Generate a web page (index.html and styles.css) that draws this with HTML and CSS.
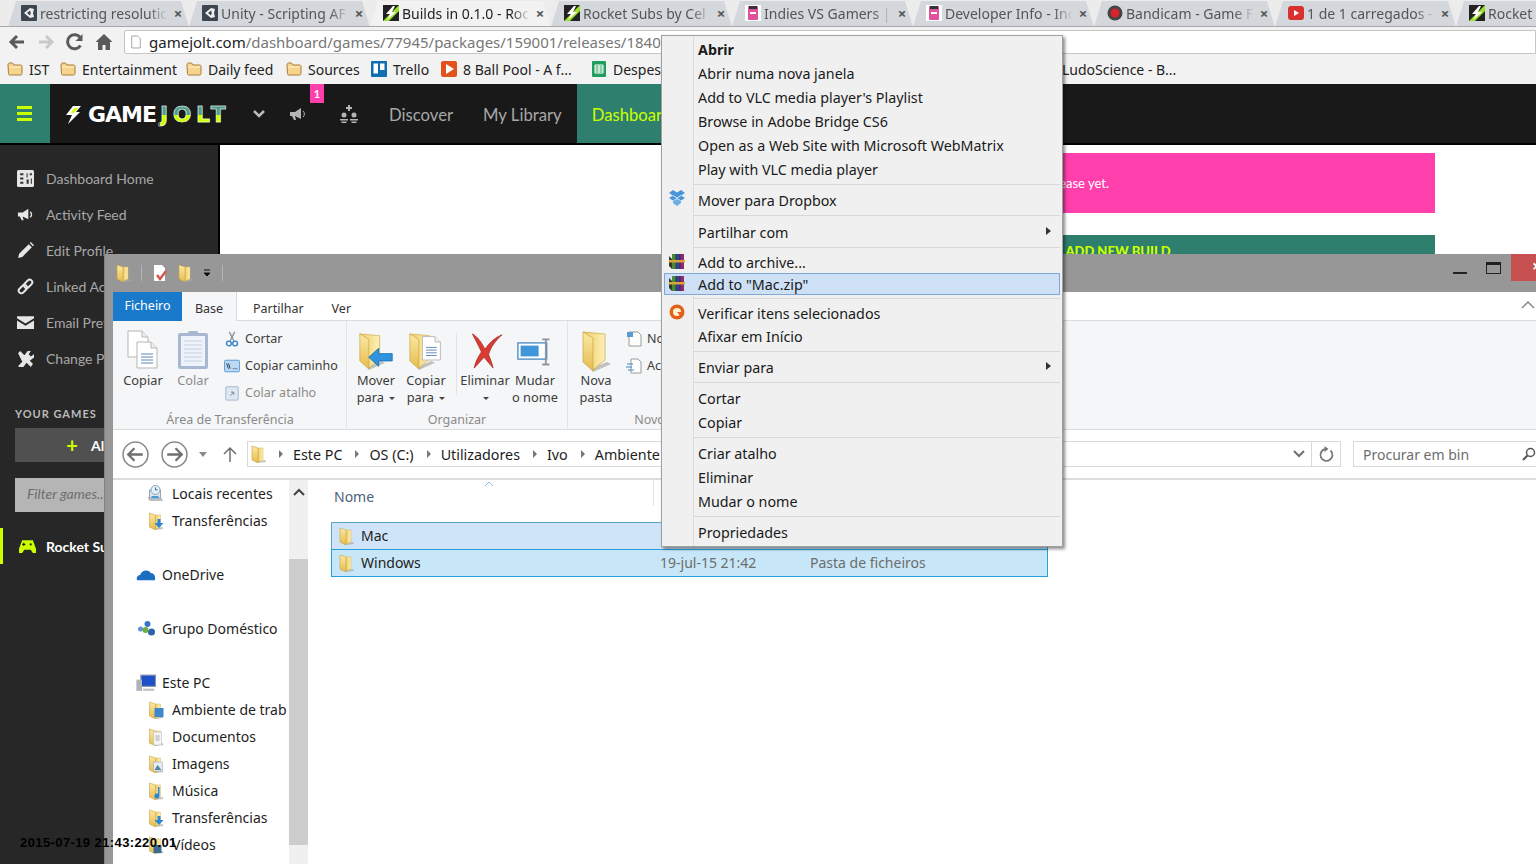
FILE: index.html
```html
<!DOCTYPE html>
<html>
<head>
    <title>Builds in 0.1.0 - Rocket Subs</title>
    <link rel="stylesheet" href="styles.css">
</head>
<body>
    <!-- shared icons -->
    <svg class="defs" width="0" height="0">
        <defs>
            <linearGradient id="fldA" x1="0" y1="0" x2="0" y2="1"><stop offset="0" stop-color="#fbe9a4"/><stop offset="1" stop-color="#e6bb4e"/></linearGradient>
            <linearGradient id="fldB" x1="0" y1="0" x2="1" y2="0"><stop offset="0" stop-color="#f0cb62"/><stop offset="1" stop-color="#fdf0b8"/></linearGradient>
        </defs>
        <symbol id="fld" viewBox="0 0 16 18">
            <path d="M8 16l7-1 1 2-8 1z" fill="#a9a9a4" opacity=".7"/>
            <path d="M8 3h5v12l-5 2z" fill="url(#fldB)" stroke="#d9b658" stroke-width=".5"/>
            <path d="M2 1l6 2v15l-6-3z" fill="url(#fldA)" stroke="#c9a23e" stroke-width=".6"/>
        </symbol>
        <symbol id="fldbig" viewBox="0 0 30 42">
            <path d="M10 39l16-7 4 2-18 8z" fill="#a9a9a4" opacity=".7"/>
            <path d="M2 2l22 2v26l-12 10z" fill="url(#fldB)" stroke="#c9a440" stroke-width=".7"/>
            <path d="M2 2l10 6v33L2 32z" fill="url(#fldA)" stroke="#c9a440" stroke-width=".7"/>
        </symbol>
        <symbol id="page" viewBox="0 0 22 28">
            <path d="M1 1h14l6 6v20H1z" fill="#fff" stroke="#b5b5b5"/>
            <path d="M15 1v6h6" fill="#eee" stroke="#b5b5b5"/>
        </symbol>
        <symbol id="rar" viewBox="0 0 16 16">
            <path d="M0 3l3 3v10l-3-3z" fill="#2e3a24"/>
            <path d="M3 1h4v15H3z" fill="#4a8a3a"/>
            <path d="M7 1h4v15H7z" fill="#3b3f9e"/>
            <path d="M11 1h4v15h-4z" fill="#8c2a74"/>
            <path d="M7 1v15M11 1v15" stroke="#222" stroke-width=".7"/>
            <path d="M0 7h16v2.500H0z" fill="#d9a23a"/>
        </symbol>
        <symbol id="bmfolder" viewBox="0 0 16 14">
            <path d="M1 3c0-1 .5-2 1.500-2h3l1.500 2h6.500c1 0 1.500.5 1.500 1.500v7c0 1-.5 1.500-1.500 1.500h-10.500c-1 0-1.500-.5-1.500-1.500z" fill="#f6d48c" stroke="#a97c3a"/>
            <path d="M2 5h12" stroke="#fff3d0"/>
        </symbol>
        <symbol id="unity" viewBox="0 0 16 16">
            <rect width="16" height="16" rx="1" fill="#3d4650"/>
            <path d="M3 8l6-5 4 1-1 4 1 4-4 1zM6 8l3 2.500.800-2.500-.800-2.500z" fill="#eee"/>
        </symbol>
        <symbol id="gj" viewBox="0 0 16 16">
            <rect width="16" height="16" fill="#222"/>
            <path d="M0 16L16 0v6L6 16z" fill="#9adf2a"/>
            <path d="M10 1L3 9h4l-3 6 9-8H9l3-6z" fill="#fff"/>
        </symbol>
        <symbol id="ivg" viewBox="0 0 16 16">
            <rect width="16" height="16" fill="#fff"/>
            <rect x="3" y="1" width="10" height="14" rx="1" fill="#e0529c"/>
            <rect x="4" y="1" width="8" height="3" fill="#333"/>
            <rect x="5" y="7" width="6" height="2" fill="#fff"/>
        </symbol>
        <symbol id="bandi" viewBox="0 0 16 16">
            <circle cx="8" cy="8" r="7.500" fill="#444"/>
            <circle cx="8" cy="8" r="4.500" fill="#d8232a"/>
        </symbol>
        <symbol id="yt" viewBox="0 0 16 16">
            <rect y="1" width="16" height="14" rx="3" fill="#d9322e"/>
            <path d="M6 5l5 3-5 3z" fill="#fff"/>
        </symbol>
        <symbol id="arrowtri" viewBox="0 0 6 8">
            <path d="M1 0l4 4-4 4z" fill="#777"/>
        </symbol>
    </svg>

    <div class="browser">
        <div class="tabstrip">
            <div class="tab"><svg class="fav"><use href="#unity"/></svg><span class="tab-title">restricting resolutic</span><span class="tab-x">×</span></div>
            <div class="tab"><svg class="fav"><use href="#unity"/></svg><span class="tab-title">Unity - Scripting AF</span><span class="tab-x">×</span></div>
            <div class="tab active"><svg class="fav"><use href="#gj"/></svg><span class="tab-title">Builds in 0.1.0 - Roc</span><span class="tab-x">×</span></div>
            <div class="tab"><svg class="fav"><use href="#gj"/></svg><span class="tab-title">Rocket Subs by Cel</span><span class="tab-x">×</span></div>
            <div class="tab"><svg class="fav"><use href="#ivg"/></svg><span class="tab-title">Indies VS Gamers |</span><span class="tab-x">×</span></div>
            <div class="tab"><svg class="fav"><use href="#ivg"/></svg><span class="tab-title">Developer Info - Inc</span><span class="tab-x">×</span></div>
            <div class="tab"><svg class="fav"><use href="#bandi"/></svg><span class="tab-title">Bandicam - Game F</span><span class="tab-x">×</span></div>
            <div class="tab"><svg class="fav"><use href="#yt"/></svg><span class="tab-title">1 de 1 carregados -</span><span class="tab-x">×</span></div>
            <div class="tab"><svg class="fav"><use href="#gj"/></svg><span class="tab-title">Rocket</span></div>
        </div>

        <div class="toolbar">
            <svg class="tb-icon" viewBox="0 0 20 20"><path d="M17 10H5M10 4l-6 6 6 6" fill="none" stroke="#5a5a5a" stroke-width="3"/></svg>
            <svg class="tb-icon" viewBox="0 0 20 20"><path d="M3 10h12M10 4l6 6-6 6" fill="none" stroke="#c9c9c9" stroke-width="3"/></svg>
            <svg class="tb-icon" viewBox="0 0 20 20"><path d="M15.500 13.500A7 7 0 1 1 15.500 6" fill="none" stroke="#5a5a5a" stroke-width="3"/><path d="M17.500 2v7h-7z" fill="#5a5a5a"/></svg>
            <svg class="tb-icon" viewBox="0 0 20 20"><path d="M10 2L1.500 10H4v8h4.500v-5h3v5H16v-8h2.500z" fill="#5a5a5a"/></svg>
            <div class="urlbar">
                <svg class="url-page" viewBox="0 0 14 16"><path d="M2 1h7l3 3v11H2z" fill="#fff" stroke="#999"/></svg>
                <span class="url-host">gamejolt.com</span><span class="url-path">/dashboard/games/77945/packages/159001/releases/184012/edit</span>
            </div>
        </div>

        <div class="bookmarks">
            <div class="bm bm-ist"><svg class="bm-icon"><use href="#bmfolder"/></svg>IST</div>
            <div class="bm bm-ent"><svg class="bm-icon"><use href="#bmfolder"/></svg>Entertainment</div>
            <div class="bm bm-daily"><svg class="bm-icon"><use href="#bmfolder"/></svg>Daily feed</div>
            <div class="bm bm-src"><svg class="bm-icon"><use href="#bmfolder"/></svg>Sources</div>
            <div class="bm bm-trello"><svg class="bm-icon" viewBox="0 0 16 16"><rect width="16" height="16" rx="1" fill="#0f6fb0"/><rect x="2.500" y="2.500" width="4.500" height="10" fill="#fff"/><rect x="9" y="2.500" width="4.500" height="6.500" fill="#fff"/></svg>Trello</div>
            <div class="bm bm-pool"><svg class="bm-icon" viewBox="0 0 16 16"><rect width="16" height="16" rx="2" fill="#e2521d"/><path d="M5 3l8 5-8 5z" fill="#fff"/></svg>8 Ball Pool - A f...</div>
            <div class="bm bm-sheet"><svg class="bm-icon" viewBox="0 0 16 16"><rect x="1" width="14" height="16" rx="1" fill="#1f9e5e"/><path d="M4 4h8v8H4zM4 8h8M4 6h8M4 10h8M8 4v8" fill="none" stroke="#fff"/></svg>Despesas</div>
            <div class="bm bm-ludo">LudoScience - B...</div>
        </div>

        <nav class="site-nav">
            <div class="burger"><span></span><span></span><span></span></div>
            <div class="gj-logo">
                <svg class="gj-bolt" viewBox="0 0 16 18"><path d="M8 0h8L11 6h4L3 18l4-9H1z" fill="#fff"/><path d="M9 2h4L9 7H6z" fill="#ccff00"/></svg>
                <span class="gj-game">GAME</span><span class="gj-jolt">JOLT</span>
            </div>
            <svg class="nav-chev" viewBox="0 0 14 10"><path d="M2 2l5 5 5-5" fill="none" stroke="#bbb" stroke-width="2.500"/></svg>
            <svg class="nav-mega" viewBox="0 0 18 14"><path d="M1 5h5l6-4v11L6 9 7 13H5L3 9H1z" fill="#b5b5b5"/><path d="M14 4a4 4 0 0 1 0 6" fill="none" stroke="#b5b5b5"/></svg>
            <span class="nav-badge">1</span>
            <svg class="nav-people" viewBox="0 0 20 20"><path d="M9 1h2v2h2v2h-2v2H9V5H7V3h2z" fill="#b5b5b5"/><circle cx="5" cy="11" r="2.500" fill="#b5b5b5"/><circle cx="15" cy="11" r="2.500" fill="#b5b5b5"/><path d="M1 15h8v1.500H1zM11 15h8v1.500h-8zM2.500 17.500h5V19h-5zM12.500 17.500h5V19h-5z" fill="#b5b5b5"/></svg>
            <a class="nav-link nav-discover">Discover</a>
            <a class="nav-link">My Library</a>
            <a class="nav-link nav-active">Dashboard</a>
        </nav>

        <div class="page">
            <aside class="sidebar">
                <div class="side-item">
                    <svg class="side-icon" viewBox="0 0 16 16"><rect width="16" height="16" rx="1.500" fill="#e6e6e6"/><path d="M3 3h3v2H3zM3 7h3v2H3zM3 11h3v2H3zM9 3h1v4H9zM12 3h2v2h-2zM9 9h2v4H9zM13 8h1v5h-1z" fill="#333"/></svg>
                    Dashboard Home
                </div>
                <div class="side-item">
                    <svg class="side-icon" viewBox="0 0 18 14"><path d="M1 5h5l6-4v11L6 9 7 13H5L3 9H1z" fill="#e6e6e6"/><path d="M14 4a4 4 0 0 1 0 6" fill="none" stroke="#e6e6e6" stroke-width="1.500"/></svg>
                    Activity Feed
                </div>
                <div class="side-item">
                    <svg class="side-icon" viewBox="0 0 16 16"><path d="M1 15l1-4L11 2l3 3-9 9zM12 1l1-1 3 3-1 1z" fill="#e6e6e6"/></svg>
                    Edit Profile
                </div>
                <div class="side-item">
                    <svg class="side-icon" viewBox="0 0 16 16"><g transform="rotate(-45 8 8)" fill="none" stroke="#e6e6e6" stroke-width="1.800"><rect x="0" y="5.500" width="9" height="5" rx="2.500"/><rect x="7" y="5.500" width="9" height="5" rx="2.500"/></g></svg>
                    Linked Accounts
                </div>
                <div class="side-item">
                    <svg class="side-icon" viewBox="0 0 16 12"><path d="M0 0h16v2L8 7 0 2z" fill="#e6e6e6"/><path d="M0 4l8 5 8-5v8H0z" fill="#e6e6e6"/></svg>
                    Email Preferences
                </div>
                <div class="side-item">
                    <svg class="side-icon" viewBox="0 0 16 16"><path d="M1 3l2-2 4 4 3-4h3l-2 3 2 2 3-2v3l-4 3 3 3-2 3-4-4-3 4H2l-1-1 4-4z" fill="#e6e6e6"/></svg>
                    Change Password
                </div>
                <div class="side-title">YOUR GAMES</div>
                <div class="side-add"><span class="side-plus">+</span>All Games</div>
                <div class="side-filter">Filter games...</div>
                <div class="side-game">
                    <svg class="side-icon" viewBox="0 0 16 12"><path d="M3 0h10l3 8v4h-3l-2-3H5l-2 3H0V8z" fill="#ccff00"/><path d="M3 4h3M4.500 2.500v3" stroke="#222"/><circle cx="11" cy="4" r="1" fill="#222"/></svg>
                    Rocket Subs
                </div>
            </aside>
            <main class="content">
                <div class="notice">This package doesn't have a release yet.</div>
                <div class="add-build">ADD NEW BUILD</div>
            </main>
        </div>
    </div>

    <!-- explorer window -->
    <section class="explorer">
        <header class="ex-title">
            <svg class="qat-icon qat-first"><use href="#fld"/></svg>
            <span class="qat-sep"></span>
            <svg class="qat-icon" viewBox="0 0 16 18"><path d="M2 1h8l3 3v13H2z" fill="#fff"/><path d="M5 11l3 4 6-8" fill="none" stroke="#d9534f" stroke-width="2.400"/></svg>
            <svg class="qat-icon"><use href="#fld"/></svg>
            <svg class="qat-drop" viewBox="0 0 10 10"><path d="M2 2h6M2 5h6l-3 3z" stroke="#111" fill="#111"/></svg>
            <span class="qat-sep"></span>
            <div class="win-btns">
                <span class="win-min"></span>
                <span class="win-max"></span>
                <span class="win-close">×</span>
            </div>
        </header>
        <div class="ex-body">
            <div class="rb-tabs">
                <span class="rb-file">Ficheiro</span>
                <span class="rb-tab rb-base">Base</span>
                <span class="rb-tab rb-share">Partilhar</span>
                <span class="rb-tab">Ver</span>
                <svg class="rb-collapse" viewBox="0 0 14 8"><path d="M1 7l6-6 6 6" fill="none" stroke="#888" stroke-width="1.500"/></svg>
            </div>

            <div class="ribbon">
                <div class="rb-group rb-g1">
                    <div class="rb-tools">
                        <div class="rb-big">
                            <svg class="rb-ico" viewBox="0 0 36 42"><use href="#page" x="2" y="0" width="22" height="28"/><use href="#page" x="11" y="11" width="22" height="28"/><path d="M16 24h12M16 27h12M16 30h12M16 33h12" stroke="#5a84b8"/></svg>
                            <span>Copiar</span>
                        </div>
                        <div class="rb-big rb-off">
                            <svg class="rb-ico" viewBox="0 0 36 42"><rect x="3" y="3" width="30" height="36" rx="2" fill="#a8b8d2"/><rect x="6" y="6" width="24" height="30" fill="#eef3fa"/><path d="M9 11h18M9 15h18M9 19h18M9 23h18M9 27h18M9 31h18" stroke="#c3d0e4"/><path d="M12 4h12l-2-3h-8z" fill="#a8b8d2"/></svg>
                            <span>Colar</span>
                        </div>
                        <div class="rb-small">
                            <div class="rb-row"><svg class="rb-sm" viewBox="0 0 16 18"><path d="M5 1l5 10M11 1L6 11" stroke="#8a9098" stroke-width="1.500"/><circle cx="4.500" cy="14" r="2.700" fill="none" stroke="#2f7fc8" stroke-width="1.500"/><circle cx="11.500" cy="14" r="2.700" fill="none" stroke="#2f7fc8" stroke-width="1.500"/></svg>Cortar</div>
                            <div class="rb-row"><svg class="rb-sm" viewBox="0 0 18 14"><rect x=".5" y=".5" width="17" height="13" rx="1.500" fill="#bcd9f3" stroke="#4c94d4"/><path d="M3 4l2 6M5 4l2 6M10 10h1M12 10h1M14 10h1" stroke="#234"/></svg>Copiar caminho</div>
                            <div class="rb-row rb-off"><svg class="rb-sm" viewBox="0 0 16 18"><rect x="1" y="2" width="14" height="15" rx="1" fill="#dfe7f2" stroke="#9db0cb"/><path d="M6 12l4-4M7 8h3v3" stroke="#6b7e98" fill="none"/></svg>Colar atalho</div>
                        </div>
                    </div>
                    <div class="rb-label">Área de Transferência</div>
                </div>

                <div class="rb-group rb-g2">
                    <div class="rb-tools">
                        <div class="rb-big">
                            <svg class="rb-ico" viewBox="0 0 40 42"><use href="#fldbig" x="0" y="0" width="30" height="42"/><path d="M12 28l11-10v6h15v8H23v6z" fill="#2f93dd" stroke="#1a6fb5"/></svg>
                            <span>Mover</span>
                            <span>para <i class="caret"></i></span>
                        </div>
                        <div class="rb-big">
                            <svg class="rb-ico" viewBox="0 0 40 42"><use href="#fldbig" x="0" y="0" width="30" height="42"/><use href="#page" x="15" y="4" width="22" height="28"/><path d="M20 17h12M20 20h12M20 23h12M20 26h12" stroke="#5a84b8"/></svg>
                            <span>Copiar</span>
                            <span>para <i class="caret"></i></span>
                        </div>
                        <span class="rb-vsep"></span>
                        <div class="rb-big">
                            <svg class="rb-ico" viewBox="0 0 40 42"><path d="M6 2c6 3 11 11 14 17C25 12 31 6 39 3c-7 6-13 14-15 22 2 5 4 10 5 15-3-4-7-8-10-12-4 4-8 9-11 12 1-6 4-12 8-18C13 15 9 8 6 2z" fill="#d93a32" stroke="#a82420" stroke-width=".8"/></svg>
                            <span>Eliminar</span>
                            <span><i class="caret"></i></span>
                        </div>
                        <div class="rb-big">
                            <svg class="rb-ico" viewBox="0 0 40 42"><rect x="1" y="12" width="32" height="18" fill="#fff" stroke="#4c8cc0" stroke-width="1.500"/><rect x="4" y="15" width="20" height="12" fill="#3f96d9"/><path d="M28 8h8M28 36h8M32 8v28" stroke="#8d959e" stroke-width="2"/></svg>
                            <span>Mudar</span>
                            <span>o nome</span>
                        </div>
                    </div>
                    <div class="rb-label">Organizar</div>
                </div>

                <div class="rb-group rb-g3">
                    <div class="rb-tools">
                        <div class="rb-big">
                            <svg class="rb-ico" viewBox="0 0 36 42"><use href="#fldbig" x="3" y="0" width="30" height="42"/></svg>
                            <span>Nova</span>
                            <span>pasta</span>
                        </div>
                        <div class="rb-small rb-small-new">
                            <div class="rb-row"><svg class="rb-sm" viewBox="0 0 16 16"><path d="M3 1h9l3 3v11H3z" fill="#fff" stroke="#9a9a9a"/><rect x="1" y="1" width="6" height="5" fill="#5b9bd5"/></svg>Novo item</div>
                            <div class="rb-row"><svg class="rb-sm" viewBox="0 0 16 16"><path d="M5 1h7l3 3v11H5z" fill="#fff" stroke="#9a9a9a"/><path d="M1 6h6M0 9h6M2 12h6" stroke="#3c86c8"/></svg>Acesso fácil</div>
                        </div>
                    </div>
                    <div class="rb-label">Novo</div>
                </div>
            </div>

            <div class="addr-row">
                <svg class="addr-circle" viewBox="0 0 26 26"><circle cx="13" cy="13" r="12" fill="none" stroke="#8a8a8a" stroke-width="1.500"/><path d="M20 13H7M12 7l-6 6 6 6" fill="none" stroke="#6f6f6f" stroke-width="2.200"/></svg>
                <svg class="addr-circle" viewBox="0 0 26 26"><circle cx="13" cy="13" r="12" fill="none" stroke="#8a8a8a" stroke-width="1.500"/><path d="M6 13h13M14 7l6 6-6 6" fill="none" stroke="#6f6f6f" stroke-width="2.200"/></svg>
                <svg class="addr-drop" viewBox="0 0 8 5"><path d="M0 0h8L4 5z" fill="#8a8a8a"/></svg>
                <svg class="addr-up" viewBox="0 0 14 16"><path d="M7 16V2M1 8l6-6 6 6" fill="none" stroke="#6f6f6f" stroke-width="1.500"/></svg>
                <div class="addr-box">
                    <svg class="addr-fld"><use href="#fld"/></svg>
                    <svg class="crumb-tri"><use href="#arrowtri"/></svg><span class="crumb">Este PC</span>
                    <svg class="crumb-tri"><use href="#arrowtri"/></svg><span class="crumb">OS (C:)</span>
                    <svg class="crumb-tri"><use href="#arrowtri"/></svg><span class="crumb">Utilizadores</span>
                    <svg class="crumb-tri"><use href="#arrowtri"/></svg><span class="crumb">Ivo</span>
                    <svg class="crumb-tri"><use href="#arrowtri"/></svg><span class="crumb">Ambiente de trabalho</span>
                    <svg class="addr-chev" viewBox="0 0 12 8"><path d="M1 1l5 5 5-5" fill="none" stroke="#6f6f6f" stroke-width="2"/></svg>
                    <svg class="addr-refresh" viewBox="0 0 16 16"><path d="M12.500 4.500a6 6 0 1 1-5-1.500" fill="none" stroke="#777" stroke-width="1.800"/><path d="M6.500 0v6l4-3z" fill="#777"/></svg>
                </div>
                <div class="search-box">
                    <span>Procurar em bin</span>
                    <svg class="search-ico" viewBox="0 0 14 14"><circle cx="8.500" cy="5.500" r="4" fill="none" stroke="#555" stroke-width="1.500"/><path d="M5.500 8.500L1 13" stroke="#555" stroke-width="2"/></svg>
                </div>
            </div>

            <div class="ex-main">
                <div class="navpane">
                    <div class="nv nv-1"><svg class="nv-icon" viewBox="0 0 18 18"><path d="M1 12h13l3 4H3z" fill="#b9c0c8"/><rect x="3" y="5" width="11" height="8" fill="#dfe5ea" stroke="#98a4ae"/><circle cx="9" cy="5" r="4.500" fill="#e6f0f7" stroke="#7fa6c4"/><path d="M9 2.500V5h2" stroke="#3a6f98" fill="none"/><path d="M5 11h7v2H5z" fill="#4e9ad4"/></svg>Locais recentes</div>
                    <div class="nv nv-1"><svg class="nv-icon" viewBox="0 0 16 18"><use href="#fld" width="16" height="18"/><path d="M10 7h3v4h3l-4.500 5L7 11h3z" fill="#2c86d6"/></svg>Transferências</div>
                    <div class="nv nv-0 nv-gap"><svg class="nv-icon" viewBox="0 0 20 14"><path d="M1 12c-1-3 1-5 3-5 1-4 7-6 10-2 3 0 5 3 4 7z" fill="#1b6ec2"/></svg>OneDrive</div>
                    <div class="nv nv-0 nv-gap"><svg class="nv-icon" viewBox="0 0 18 18"><circle cx="10" cy="4" r="3" fill="#3a74c4"/><circle cx="3" cy="9" r="2.500" fill="#5b92d8"/><circle cx="14" cy="12" r="3.500" fill="#2c62ae"/><circle cx="8" cy="10" r="3" fill="#6cae3f"/></svg>Grupo Doméstico</div>
                    <div class="nv nv-0 nv-gap"><svg class="nv-icon" viewBox="0 0 18 16"><rect x="4" y="1" width="13" height="10" fill="#1e50c8" stroke="#8a97a8"/><path d="M0 5h5v10H0z" fill="#aeb4bc"/><path d="M6 13h10v2H6z" fill="#c0c4ca"/></svg>Este PC</div>
                    <div class="nv nv-1"><svg class="nv-icon" viewBox="0 0 16 18"><use href="#fld" width="16" height="18"/><rect x="7" y="7" width="9" height="9" fill="#3f86cc"/></svg>Ambiente de trab</div>
                    <div class="nv nv-1"><svg class="nv-icon" viewBox="0 0 16 18"><use href="#fld" width="16" height="18"/><rect x="6" y="4" width="8" height="13" fill="#f4f4f4" stroke="#bbb" stroke-width=".6"/><path d="M8 8h4M8 10h4M8 12h4" stroke="#aaa"/></svg>Documentos</div>
                    <div class="nv nv-1"><svg class="nv-icon" viewBox="0 0 16 18"><use href="#fld" width="16" height="18"/><rect x="6" y="7" width="9" height="9" fill="#e4edf4" stroke="#aaa" stroke-width=".6"/><path d="M7 15l3-5 4 5z" fill="#4f86a8"/></svg>Imagens</div>
                    <div class="nv nv-1"><svg class="nv-icon" viewBox="0 0 16 18"><use href="#fld" width="16" height="18"/><path d="M12 5v9a2.500 2.500 0 1 1-1.500-2.300V5z" fill="#2c86d6"/></svg>Música</div>
                    <div class="nv nv-1"><svg class="nv-icon" viewBox="0 0 16 18"><use href="#fld" width="16" height="18"/><path d="M10 7h3v4h3l-4.500 5L7 11h3z" fill="#2c86d6"/></svg>Transferências</div>
                    <div class="nv nv-1"><svg class="nv-icon" viewBox="0 0 16 18"><use href="#fld" width="16" height="18"/><rect x="6" y="9" width="8" height="8" fill="#3c6c94"/></svg>Vídeos</div>
                </div>
                <div class="nav-scroll">
                    <svg class="nav-scroll-up" viewBox="0 0 12 8"><path d="M1 7l5-5 5 5" fill="none" stroke="#444" stroke-width="2"/></svg>
                    <div class="nav-scroll-thumb"></div>
                </div>
                <div class="files">
                    <div class="files-head">
                        <span class="col-name">Nome</span>
                        <svg class="sort-tri" viewBox="0 0 10 5"><path d="M1 5l4-4 4 4" fill="none" stroke="#8fb4d6"/></svg>
                        <span class="col-sep"></span>
                    </div>
                    <div class="file-row file-mac">
                        <svg class="file-ico"><use href="#fld"/></svg>
                        <span class="file-name">Mac</span>
                        <span class="file-date">19-jul-15 21:42</span>
                        <span class="file-type">Pasta de ficheiros</span>
                    </div>
                    <div class="file-row file-win">
                        <svg class="file-ico"><use href="#fld"/></svg>
                        <span class="file-name">Windows</span>
                        <span class="file-date">19-jul-15 21:42</span>
                        <span class="file-type">Pasta de ficheiros</span>
                    </div>
                </div>
            </div>
        </div>
    </section>

    <!-- right click menu -->
    <div class="menu">
        <div class="mi mi-bold">Abrir</div>
        <div class="mi">Abrir numa nova janela</div>
        <div class="mi">Add to VLC media player's Playlist</div>
        <div class="mi">Browse in Adobe Bridge CS6</div>
        <div class="mi">Open as a Web Site with Microsoft WebMatrix</div>
        <div class="mi">Play with VLC media player</div>
        <div class="ms"></div>
        <div class="mi"><svg class="mi-ico" viewBox="0 0 16 16"><path d="M4 0l4 2.500L12 0l4 3-4 2.500L16 8l-4 2.500-4-2.500-4 2.500L0 8l4-2.500L0 3z" fill="#4a94d8"/><path d="M4 11l4-2 4 2v2l-4 3-4-3z" fill="#6aaee6"/><path d="M4 5.500l4 2.500 4-2.500" fill="none" stroke="#d6e8f7"/></svg>Mover para Dropbox</div>
        <div class="ms ms-8"></div>
        <div class="mi mi-sub">Partilhar com</div>
        <div class="ms"></div>
        <div class="mi mi-22"><svg class="mi-ico"><use href="#rar"/></svg>Add to archive...</div>
        <div class="mi mi-22 mi-hover"><svg class="mi-ico"><use href="#rar"/></svg>Add to "Mac.zip"</div>
        <div class="ms"></div>
        <div class="mi mi-22"><svg class="mi-ico" viewBox="0 0 16 16"><circle cx="8" cy="8" r="7.500" fill="#e2611a"/><circle cx="8" cy="8" r="4" fill="#fff0d0"/><path d="M8 8h6l-2 5z" fill="#e2611a"/></svg>Verificar itens selecionados</div>
        <div class="mi">Afixar em Início</div>
        <div class="ms"></div>
        <div class="mi mi-sub">Enviar para</div>
        <div class="ms"></div>
        <div class="mi">Cortar</div>
        <div class="mi">Copiar</div>
        <div class="ms"></div>
        <div class="mi">Criar atalho</div>
        <div class="mi">Eliminar</div>
        <div class="mi">Mudar o nome</div>
        <div class="ms"></div>
        <div class="mi">Propriedades</div>
    </div>

    <div class="stamp">2015-07-19 21:43:220.01</div>
</body>
</html>
```

FILE: styles.css
```css
html, body {
    margin: 0;
    padding: 0;
    height: 100%;
    overflow: hidden;
}

body {
    font-family: "Noto Sans", sans-serif;
    background-color: #fff;
    color: #222;
}

.defs {
    position: absolute;
}

.browser {
    display: flex;
    flex-direction: column;
    height: 864px;
}

/* tabs */
.tabstrip {
    display: flex;
    flex: none;
    height: 27px;
    padding-left: 8px;
    background-color: #ececec;
    border-bottom: 1px solid #a8a8a8;
    box-sizing: border-box;
    overflow: hidden;
}

.tab {
    display: flex;
    flex: none;
    align-items: center;
    width: 181px;
    min-width: 0;
    height: 26px;
    margin-top: 1px;
    padding: 0 4px 2px 13px;
    box-sizing: border-box;
    background-color: #d4d7dc;
    color: #555;
    font-size: 14px;
    clip-path: polygon(8px 0, calc(100% - 8px) 0, 100% 100%, 0 100%);
}

.tab.active {
    background-color: #f2f2f2;
    color: #222;
}

.fav {
    flex: none;
    width: 16px;
    height: 16px;
    margin-right: 3px;
}

.tab-title {
    flex: 1;
    min-width: 0;
    white-space: nowrap;
    overflow: hidden;
    -webkit-mask-image: linear-gradient(to right, #000 85%, transparent);
    mask-image: linear-gradient(to right, #000 85%, transparent);
}

.tab-x {
    flex: none;
    width: 14px;
    margin-left: 3px;
    font-size: 15px;
    font-weight: bold;
    color: #555;
    text-align: center;
}

/* chrome toolbar */
.toolbar {
    display: flex;
    align-items: center;
    flex: none;
    height: 29px;
    padding-left: 7px;
    background-color: #f2f2f2;
}

.tb-icon {
    flex: none;
    width: 20px;
    height: 20px;
    margin-right: 9px;
}

.urlbar {
    display: flex;
    align-items: center;
    flex: 1;
    height: 24px;
    min-width: 0;
    margin-left: 1px;
    padding-left: 5px;
    padding-top: 1px;
    box-sizing: border-box;
    background-color: #fff;
    border: 1px solid #c6c6c6;
    border-radius: 2px 0 0 2px;
    font-size: 15px;
    white-space: nowrap;
    overflow: hidden;
}

.url-page {
    flex: none;
    width: 12px;
    height: 16px;
    margin-right: 7px;
}

.url-path {
    color: #777;
}

/* bookmarks */
.bookmarks {
    display: flex;
    align-items: center;
    flex: none;
    height: 28px;
    padding-left: 7px;
    padding-bottom: 2px;
    box-sizing: border-box;
    background-color: #f2f2f2;
    font-size: 14px;
    white-space: nowrap;
}

.bm {
    display: flex;
    align-items: center;
    flex: none;
    box-sizing: border-box;
}

.bm-icon {
    flex: none;
    width: 16px;
    height: 16px;
    margin-right: 6px;
}

.bm-ist { width: 53px; }
.bm-ent { width: 126px; }
.bm-daily { width: 100px; }
.bm-src { width: 85px; }
.bm-trello { width: 70px; }
.bm-pool { width: 150px; }
.bm-sheet { width: 471px; }

/* game jolt nav */
.site-nav {
    display: flex;
    align-items: center;
    position: relative;
    flex: none;
    height: 61px;
    box-sizing: border-box;
    background-color: #191919;
    border-bottom: 2px solid #000;
    font-family: Lato, sans-serif;
}

.burger {
    display: flex;
    flex-direction: column;
    justify-content: center;
    gap: 3px;
    flex: none;
    width: 50px;
    height: 100%;
    padding-left: 17px;
    box-sizing: border-box;
    background-color: #2f7f6e;
}

.burger span {
    display: block;
    width: 15px;
    height: 3px;
    background-color: #ccff00;
}

.gj-logo {
    display: flex;
    align-items: center;
    flex: none;
    width: 187px;
    margin-left: 15px;
    padding-top: 2px;
    box-sizing: border-box;
    font-family: "DejaVu Sans", sans-serif;
    font-weight: bold;
    font-size: 22px;
    line-height: 22px;
}

.gj-bolt {
    flex: none;
    width: 16px;
    height: 18px;
    margin-right: 7px;
}

.gj-game {
    width: 72px;
    color: #fff;
    letter-spacing: -1px;
}

.gj-jolt {
    letter-spacing: 4.500px;
    background: linear-gradient(to bottom, #4f9d8a 50%, #ccff00 50%);
    -webkit-background-clip: text;
    background-clip: text;
    color: transparent;
    -webkit-text-stroke: 0.5px #fff;
}

.nav-chev {
    flex: none;
    width: 14px;
    height: 10px;
}

.nav-mega {
    flex: none;
    width: 18px;
    height: 14px;
    margin-left: 23px;
}

.nav-badge {
    position: absolute;
    left: 310px;
    top: 0;
    width: 14px;
    height: 19px;
    background-color: #ff3fac;
    color: #fff;
    font-size: 11px;
    font-weight: bold;
    line-height: 19px;
    text-align: center;
}

.nav-people {
    flex: none;
    width: 20px;
    height: 20px;
    margin-left: 32px;
}

.nav-link {
    flex: none;
    padding: 0 15px;
    height: 100%;
    line-height: 62px;
    font-size: 16.700px;
    color: #a8a8a8;
}

.nav-discover {
    margin-left: 15px;
}

.nav-active {
    width: 110px;
    background-color: #2f7f6e;
    color: #ccff00;
}

/* below the nav */
.page {
    display: flex;
    flex: 1;
    min-height: 0;
}

.sidebar {
    flex: none;
    width: 220px;
    padding-top: 15px;
    box-sizing: border-box;
    background-color: #272727;
    border-right: 2px solid #000;
    font-family: Lato, sans-serif;
    font-size: 14px;
    color: #a8a8a8;
}

.side-item {
    display: flex;
    align-items: center;
    height: 36px;
    padding-left: 17px;
}

.side-icon {
    flex: none;
    width: 17px;
    height: 17px;
    margin-right: 12px;
}

.side-title {
    margin: 30px 15px 0;
    height: 16px;
    font-size: 11px;
    font-weight: bold;
    line-height: 16px;
    letter-spacing: 1px;
    color: #bbb;
}

.side-add {
    display: flex;
    align-items: center;
    justify-content: center;
    height: 34px;
    margin: 6px 15px 0;
    padding-left: 2px;
    background-color: #505050;
    color: #fff;
    font-weight: bold;
}

.side-plus {
    margin-right: 13px;
    font-size: 20px;
    color: #ccff00;
}

.side-filter {
    height: 34px;
    margin: 16px 15px 0;
    padding-left: 12px;
    background-color: #b5b5b5;
    color: #6e6e6e;
    font-style: italic;
    line-height: 31px;
}

.side-game {
    display: flex;
    align-items: center;
    height: 36px;
    margin-top: 16px;
    padding-left: 17px;
    border-left: 3px solid #ccff00;
    color: #fff;
    font-weight: bold;
}

.side-game .side-icon {
    margin-left: -1px;
    margin-right: 10px;
}

.content {
    flex: 1;
    padding: 8px 101px 0 581px;
    font-family: Lato, sans-serif;
}

.notice {
    height: 60px;
    padding-left: 82px;
    background-color: #ff3fac;
    color: #fff;
    font-size: 13px;
    line-height: 60px;
}

.add-build {
    height: 50px;
    margin-top: 22px;
    background-color: #2f7f6e;
    color: #ccff00;
    font-size: 13px;
    font-weight: 900;
    line-height: 33px;
    text-align: center;
}

/* explorer */
.explorer {
    position: absolute;
    left: 104px;
    top: 254px;
    right: 0;
    bottom: 0;
    display: flex;
    flex-direction: column;
    background-color: #979797;
    border-left: 1px solid #808080;
    font-size: 14px;
    color: #1e1e1e;
}

.ex-title {
    display: flex;
    align-items: center;
    flex: none;
    height: 38px;
    padding-left: 8px;
    box-sizing: border-box;
}

.qat-icon {
    flex: none;
    width: 16px;
    height: 18px;
    margin-right: 9px;
}

.qat-first {
    margin-left: 2px;
    margin-right: 10px;
}

.qat-sep {
    flex: none;
    width: 1px;
    height: 16px;
    margin-right: 10px;
    background-color: #b5b5b5;
}

.qat-drop {
    flex: none;
    width: 10px;
    height: 10px;
    margin-right: 10px;
}

.win-btns {
    display: flex;
    align-self: flex-start;
    margin-left: auto;
}

.win-min {
    width: 14px;
    height: 2px;
    margin-top: 18px;
    margin-right: 19px;
    background-color: #222;
}

.win-max {
    width: 15px;
    height: 12px;
    margin-top: 8px;
    margin-right: 10px;
    border: 1px solid #222;
    border-top-width: 3px;
    box-sizing: border-box;
}

.win-close {
    width: 25px;
    height: 27px;
    padding-left: 21px;
    box-sizing: border-box;
    overflow: hidden;
    background-color: #c75050;
    color: #fff;
    font-size: 16px;
    font-weight: bold;
    line-height: 25px;
}

.ex-body {
    display: flex;
    flex-direction: column;
    flex: 1;
    min-height: 0;
    margin-left: 8px;
    background-color: #fff;
}

.rb-tabs {
    display: flex;
    position: relative;
    flex: none;
    height: 28px;
    background-color: #fff;
    font-size: 12.500px;
    line-height: 33px;
}

.rb-file {
    width: 69px;
    height: 29px;
    background-color: #1979ca;
    color: #fff;
    line-height: 28px;
    text-align: center;
}

.rb-tab {
    padding: 0 14px;
    color: #333;
}

.rb-base {
    width: 55px;
    padding: 0;
    height: 29px;
    box-sizing: border-box;
    background-color: #f5f6f7;
    border-right: 1px solid #dadbdc;
    text-align: center;
}

.rb-share {
    margin-left: 2px;
}

.rb-collapse {
    position: absolute;
    right: 1px;
    top: 9px;
    width: 14px;
    height: 8px;
}

.ribbon {
    display: flex;
    flex: none;
    height: 110px;
    box-sizing: border-box;
    background-color: #f5f6f7;
    border-top: 1px solid #dadbdc;
    border-bottom: 1px solid #dadbdc;
    font-size: 12.800px;
    color: #3c3c3c;
}

.rb-group {
    display: flex;
    flex-direction: column;
    flex: none;
    box-sizing: border-box;
    border-right: 1px solid #e2e3e4;
}

.rb-g1 { width: 234px; padding-left: 5px; }
.rb-g2 { width: 221px; padding-left: 4px; }
.rb-g3 { width: 164px; padding-left: 3px; border-right: none; }

.rb-tools {
    display: flex;
    flex: 1;
    padding-top: 9px;
}

.rb-big {
    display: flex;
    flex-direction: column;
    align-items: center;
    flex: none;
    width: 50px;
    line-height: 17px;
    white-space: nowrap;
}

.rb-ico {
    width: 36px;
    height: 42px;
}

.rb-off {
    color: #8c8c8c;
}

.rb-small {
    display: flex;
    flex-direction: column;
    margin-left: 6px;
    margin-top: -5px;
    font-size: 12.500px;
    white-space: nowrap;
}

.rb-small-new {
    margin-left: 5px;
}

.rb-row {
    display: flex;
    align-items: center;
    height: 27px;
}

.rb-sm {
    flex: none;
    width: 16px;
    height: 16px;
    margin-right: 5px;
}

.rb-vsep {
    flex: none;
    width: 1px;
    height: 62px;
    margin: 3px 3px 0 5px;
    background-color: #e2e3e4;
}

.caret {
    display: inline-block;
    width: 0;
    height: 0;
    margin-left: 2px;
    vertical-align: 2px;
    border: 3px solid transparent;
    border-top-color: #444;
    border-bottom: none;
}

.rb-label {
    height: 20px;
    padding-right: 4px;
    color: #8a8a8a;
    font-size: 12.500px;
    line-height: 22px;
    text-align: center;
}

.addr-row {
    display: flex;
    align-items: center;
    flex: none;
    height: 50px;
    padding-left: 9px;
    box-sizing: border-box;
    background-color: #fff;
    border-bottom: 2px solid #dcdcdc;
}

.addr-circle {
    flex: none;
    width: 27px;
    height: 27px;
    margin-right: 12px;
}

.addr-drop {
    flex: none;
    width: 8px;
    height: 5px;
    margin-left: -1px;
    margin-right: 16px;
}

.addr-up {
    flex: none;
    width: 14px;
    height: 16px;
    margin-right: 10px;
}

.addr-box {
    display: flex;
    align-items: center;
    flex: none;
    width: 1094px;
    height: 26px;
    box-sizing: border-box;
    padding-left: 2px;
    border: 1px solid #d9d9d9;
    white-space: nowrap;
}

.addr-fld {
    flex: none;
    width: 16px;
    height: 18px;
}

.crumb {
    font-size: 14.300px;
}

.crumb-tri {
    flex: none;
    width: 6px;
    height: 8px;
    margin-left: 12px;
    margin-right: 9px;
}

.addr-chev {
    flex: none;
    width: 12px;
    height: 8px;
    margin-left: auto;
    margin-right: 6px;
}

.addr-refresh {
    flex: none;
    width: 16px;
    height: 24px;
    padding: 0 6px;
    border-left: 1px solid #d9d9d9;
}

.search-box {
    display: flex;
    align-items: center;
    flex: 1;
    height: 26px;
    margin-left: 12px;
    padding-left: 9px;
    box-sizing: border-box;
    border: 1px solid #d9d9d9;
    border-right: none;
    color: #6d6d6d;
}

.search-ico {
    flex: none;
    width: 14px;
    height: 14px;
    margin-left: auto;
}

.ex-main {
    display: flex;
    flex: 1;
    min-height: 0;
    background-color: #fff;
}

.navpane {
    flex: none;
    width: 176px;
    overflow: hidden;
    box-sizing: border-box;
}

.nv {
    display: flex;
    align-items: center;
    height: 27px;
    white-space: nowrap;
}

.nv-0 { padding-left: 23px; }
.nv-1 { padding-left: 33px; }

.nv-gap {
    margin-top: 27px;
}

.nv-icon {
    flex: none;
    width: 19px;
    height: 18px;
    margin-right: 7px;
}

.nv-0 .nv-icon {
    width: 21px;
    margin-right: 5px;
}

.nav-scroll {
    position: relative;
    flex: none;
    width: 19px;
    background-color: #f0f0f0;
}

.nav-scroll-up {
    display: block;
    width: 12px;
    height: 8px;
    margin: 8px auto 0;
}

.nav-scroll-thumb {
    height: 286px;
    margin-top: 63px;
    background-color: #cdcdcd;
}

.files {
    flex: 1;
    position: relative;
}

.files-head {
    display: flex;
    position: relative;
    height: 40px;
    box-sizing: border-box;
    padding: 7px 0 0 26px;
    color: #4c607a;
}

.sort-tri {
    position: absolute;
    left: 176px;
    top: 1px;
    width: 10px;
    height: 5px;
}

.col-sep {
    position: absolute;
    left: 345px;
    top: 0;
    width: 1px;
    height: 26px;
    background-color: #e5e5e5;
}

.file-row {
    display: flex;
    align-items: center;
    width: 717px;
    height: 27px;
    margin-left: 23px;
    padding-bottom: 1px;
    box-sizing: border-box;
    white-space: nowrap;
}

.file-mac {
    background-color: #cfe4f9;
    border: 1px solid #5ba4c9;
    border-bottom: none;
    margin-top: 2px;
}

.file-win {
    height: 28px;
    background-color: #c7e6f7;
    border: 1px solid #26a0da;
}

.file-ico {
    flex: none;
    width: 18px;
    height: 18px;
    margin-left: 5px;
    margin-right: 6px;
}

.file-name {
    width: 299px;
    flex: none;
}

.file-date {
    width: 150px;
    flex: none;
    color: #6d6d6d;
}

.file-type {
    color: #6d6d6d;
}

/* context menu */
.menu {
    position: absolute;
    left: 661px;
    top: 35px;
    width: 402px;
    height: 512px;
    padding: 1px 2px 0;
    box-sizing: border-box;
    background-color: #f0f0f0;
    background-image: linear-gradient(to right, #f0f0f0 31px, #dcdcdc 31px, #dcdcdc 32px, #f0f0f0 32px);
    border: 1px solid #a0a0a0;
    box-shadow: 2px 2px 3px rgba(0, 0, 0, 0.45);
    font-size: 14.300px;
    color: #1a1a1a;
}

.mi {
    display: flex;
    align-items: center;
    position: relative;
    height: 24px;
    padding-left: 34px;
    box-sizing: border-box;
    white-space: nowrap;
}

.mi-22 { height: 22px; }

.mi-bold {
    font-weight: bold;
}

.mi-ico {
    position: absolute;
    left: 5px;
    top: 2px;
    width: 16px;
    height: 16px;
}

.mi-hover {
    background-color: #cde0f5;
    outline: 1px solid #7fa8d4;
    outline-offset: -1px;
}

.mi-sub::after {
    content: "";
    position: absolute;
    right: 9px;
    top: 7px;
    border-left: 5px solid #333;
    border-top: 4px solid transparent;
    border-bottom: 4px solid transparent;
}

.ms {
    height: 7px;
    margin-left: 30px;
    background-image: linear-gradient(#d8d8d8, #d8d8d8);
    background-size: 100% 1px;
    background-position: 0 3px;
    background-repeat: no-repeat;
}

.ms-8 {
    height: 8px;
}

.stamp {
    position: absolute;
    left: 20px;
    top: 835px;
    font-family: "Liberation Sans", sans-serif;
    font-size: 13px;
    font-weight: bold;
    letter-spacing: 0.4px;
    color: #000;
    white-space: nowrap;
}
```
